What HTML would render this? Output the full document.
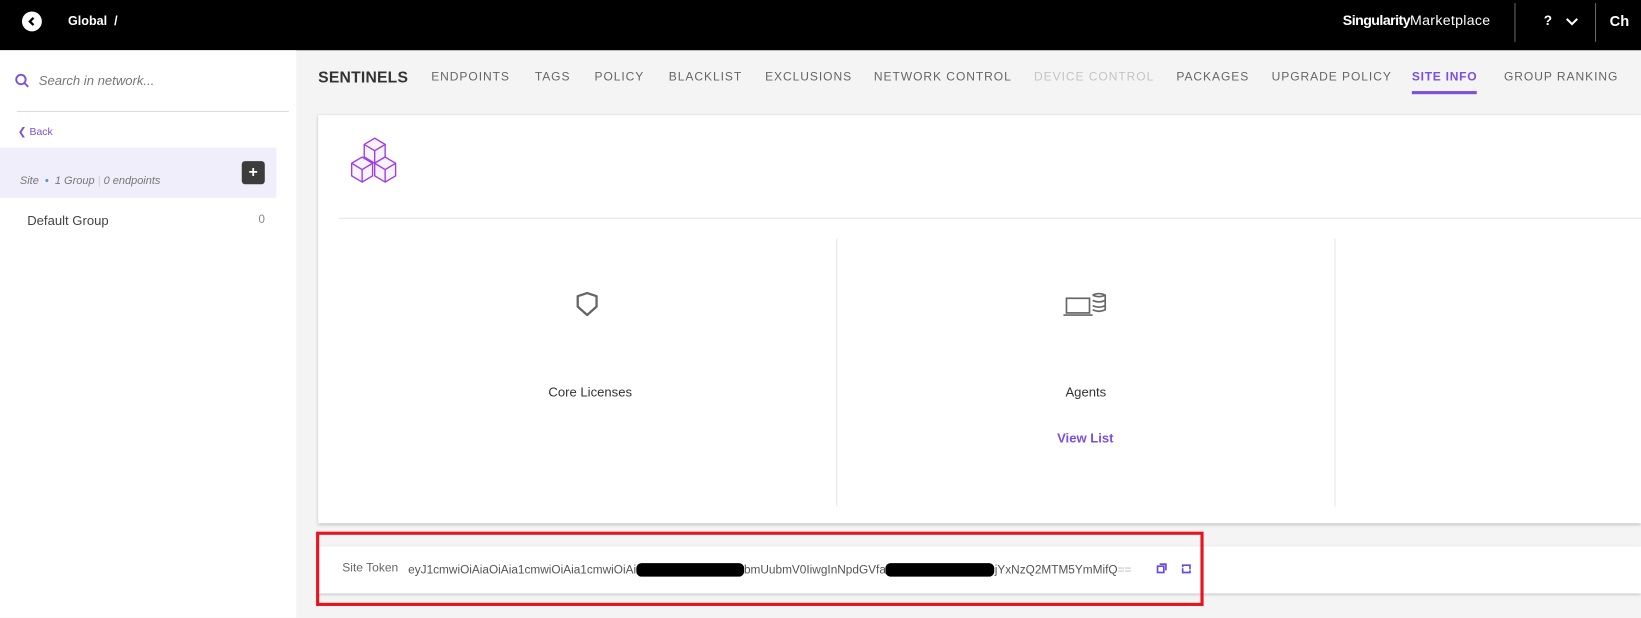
<!DOCTYPE html>
<html><head><meta charset="utf-8"><style>
html,body{margin:0;padding:0;width:1641px;height:617px;overflow:hidden;background:#f4f4f4}
#w{position:absolute;left:0;top:0;width:1568px;height:590px;transform:scale(1.0466);transform-origin:0 0;font-family:"Liberation Sans",sans-serif;background:#f4f4f4}
.a{position:absolute;white-space:nowrap}
.tab{position:absolute;top:68px;font-size:11.5px;letter-spacing:0.9px;color:#666}
</style></head><body><div id="w">
<div class="a" style="left:0;top:0;width:1568px;height:48px;background:#000"></div>
<div class="a" style="left:21px;top:11px;width:19px;height:19px;border-radius:50%;background:#fff"></div>
<svg class="a" style="left:21px;top:11px" width="19" height="19"><path d="M11 6 L7.5 9.5 L11 13" stroke="#000" stroke-width="2.2" fill="none"/></svg>
<div class="a" style="left:65px;top:13px;color:#fff;font-weight:bold;font-size:12px">Global&nbsp;&nbsp;/</div>
<div class="a" style="left:1283px;top:12px;color:#fff;font-size:13.5px;letter-spacing:0.3px"><b style="letter-spacing:-0.5px">Singularity</b><span style="font-weight:300">Marketplace</span></div>
<div class="a" style="left:1447px;top:3px;width:1px;height:37px;background:#666"></div>
<div class="a" style="left:1475px;top:12px;color:#fff;font-weight:bold;font-size:13px">?</div>
<svg class="a" style="left:1496px;top:16px" width="12" height="10"><path d="M1 2 L6 7 L11 2" stroke="#fff" stroke-width="2" fill="none"/></svg>
<div class="a" style="left:1524px;top:3px;width:1px;height:37px;background:#666"></div>
<div class="a" style="left:1538px;top:12px;color:#fff;font-weight:bold;font-size:14px">Ch</div>

<div class="a" style="left:0;top:48px;width:283px;height:542px;background:#fff"></div>
<svg class="a" style="left:14px;top:70px" width="14" height="14"><circle cx="6" cy="6" r="4.5" stroke="#7b4fe0" stroke-width="1.8" fill="none"/><path d="M9.5 9.5 L13 13" stroke="#7b4fe0" stroke-width="1.8"/></svg>
<div class="a" style="left:37px;top:70px;font-size:12.5px;font-style:italic;color:#777">Search in network...</div>
<div class="a" style="left:16px;top:106px;width:260px;height:1px;background:#ddd"></div>
<div class="a" style="left:17px;top:121px;font-size:10px;color:#7b4fe0">&#10094; Back</div>
<div class="a" style="left:0;top:141px;width:264px;height:48px;background:#f1eefb"></div>
<div class="a" style="left:19px;top:167px;font-size:10.5px;font-style:italic;color:#777">Site <span style="color:#4a90d9">&nbsp;•&nbsp;</span> 1 Group <span style="color:#ccc">|</span> 0 endpoints</div>
<div class="a" style="left:231px;top:154px;width:22px;height:22px;border-radius:3px;background:#3c3c3c;color:#fff;font-size:15px;font-weight:bold;text-align:center;line-height:21px">+</div>
<div class="a" style="left:26px;top:204px;font-size:12.5px;color:#444">Default Group</div>
<div class="a" style="left:247px;top:204px;font-size:11px;color:#888">0</div>

<div class="a" style="left:304px;top:66px;font-size:15px;font-weight:bold;letter-spacing:0.2px;color:#333">SENTINELS</div>
<div class="tab" style="left:412px">ENDPOINTS</div>
<div class="tab" style="left:511px">TAGS</div>
<div class="tab" style="left:568px">POLICY</div>
<div class="tab" style="left:639px">BLACKLIST</div>
<div class="tab" style="left:731px">EXCLUSIONS</div>
<div class="tab" style="left:835px">NETWORK CONTROL</div>
<div class="tab" style="left:988px;color:#c4c4c4">DEVICE CONTROL</div>
<div class="tab" style="left:1124px">PACKAGES</div>
<div class="tab" style="left:1215px">UPGRADE POLICY</div>
<div class="tab" style="left:1349px;color:#7b4fe0;font-weight:bold;letter-spacing:0.7px">SITE INFO</div>
<div class="tab" style="left:1437px">GROUP RANKING</div>
<div class="a" style="left:1349px;top:87px;width:62px;height:3px;background:#7b4fe0"></div>

<div class="a" style="left:304px;top:110px;width:1264px;height:390px;background:#fff;box-shadow:0 1px 3px rgba(0,0,0,.25)"></div>
<svg class="a" style="left:332px;top:126px" width="52" height="52" fill="#f4f4fa" stroke="#a33be6" stroke-width="1.3">
<path d="M16 12 L26 6 L36 12 L36 24 L26 30 L16 24 Z"/><path d="M16 12 L26 18 L36 12 M26 18 L26 30"/>
<path d="M4 30 L14 24 L24 30 L24 42 L14 48 L4 42 Z"/><path d="M4 30 L14 36 L24 30 M14 36 L14 48"/>
<path d="M26 30 L36 24 L46 30 L46 42 L36 48 L26 42 Z"/><path d="M26 30 L36 36 L46 30 M36 36 L36 48"/>
</svg>
<div class="a" style="left:324px;top:208px;width:1244px;height:1px;background:#e2e2e2"></div>
<div class="a" style="left:799px;top:228px;width:1px;height:256px;background:#e6e6e6"></div>
<div class="a" style="left:1275px;top:228px;width:1px;height:256px;background:#e6e6e6"></div>
<svg class="a" style="left:549px;top:278px" width="24" height="26"><path d="M12 2 L21 5 L21 15 L12 23 L3 15 L3 5 Z" stroke="#666" stroke-width="2.2" fill="none" stroke-linejoin="round"/></svg>
<div class="a" style="left:524px;top:368px;font-size:12.5px;color:#333">Core Licenses</div>
<svg class="a" style="left:1016px;top:278px" width="44" height="28" fill="none" stroke="#666" stroke-width="1.6"><rect x="3" y="7" width="22" height="14"/><path d="M0 23 L28 23"/><path d="M28 4 Q34 1 40 4 L40 18 Q34 21 28 18 M28 9 Q34 12 40 9 M28 14 Q34 17 40 14 M28 4 Q34 7 40 4"/></svg>
<div class="a" style="left:1018px;top:368px;font-size:12.5px;color:#333">Agents</div>
<div class="a" style="left:1010px;top:412px;font-size:12.5px;color:#7b4fe0;font-weight:bold">View List</div>

<div class="a" style="left:304px;top:522px;width:1264px;height:45px;background:#fff;box-shadow:0 1px 3px rgba(0,0,0,.25)"></div>
<div class="a" style="left:327px;top:537px;font-size:11.5px;color:#666">Site Token</div>
<div class="a" style="left:390px;top:538px;font-size:11.3px;color:#555">eyJ1cmwiOiAiaOiAia1cmwiOiAia1cmwiOiAi<span style="display:inline-block;width:103px;height:13px;background:#000;border-radius:5px;vertical-align:-3px"></span>bmUubmV0IiwgInNpdGVfa<span style="display:inline-block;width:104px;height:13px;background:#000;border-radius:5px;vertical-align:-3px"></span>jYxNzQ2MTM5YmMifQ<span style="color:#bbb">==</span></div>
<svg class="a" style="left:1105px;top:538px" width="10" height="10" fill="none" stroke="#6a4bd8" stroke-width="1.6"><rect x="1" y="3" width="6" height="6"/><path d="M3 1 L9 1 L9 7"/></svg>
<svg class="a" style="left:1128px;top:538px" width="11" height="11" fill="none" stroke="#6a4bd8" stroke-width="1.6"><path d="M2 4 L2 2 L9 2 L9 6 M9 7 L9 9 L2 9 L2 5"/></svg>
<div class="a" style="left:302px;top:508px;width:842px;height:65px;border:3px solid #e8141e"></div>
</div></body></html>
